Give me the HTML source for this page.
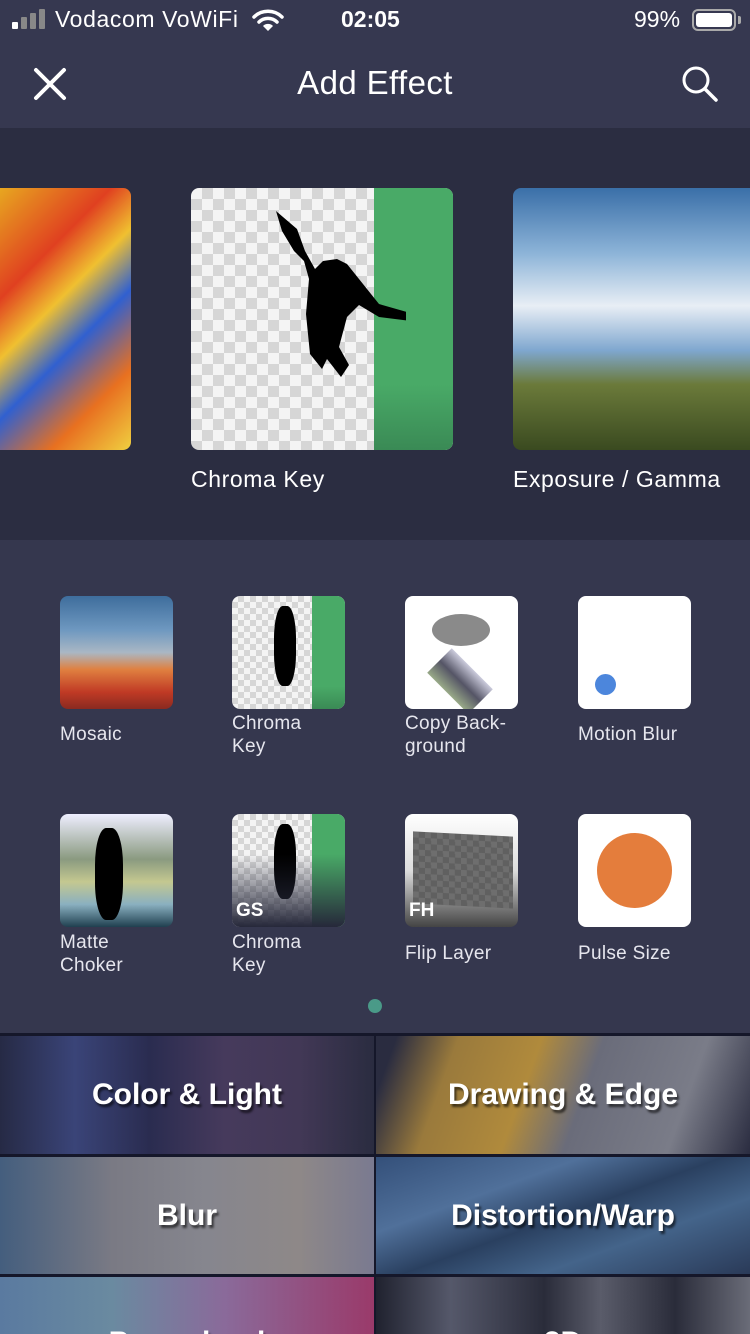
<!DOCTYPE html><html><head><meta charset="utf-8"><style>
*{margin:0;padding:0;box-sizing:border-box}
body{width:750px;height:1334px;overflow:hidden;background:#35374e;font-family:"Liberation Sans",sans-serif;color:#fff;position:relative}
.a{position:absolute}
.chk{background:repeating-conic-gradient(#d6d6d6 0 25%,#f4f4f4 0 50%) 0 0/22px 22px}
.chk2{background:repeating-conic-gradient(#d6d6d6 0 25%,#f4f4f4 0 50%) 0 0/12px 12px}
.t{position:absolute;width:113px;height:113px;border-radius:8px;overflow:hidden}
.l{position:absolute;font-size:19px;line-height:23px;color:#e6e6ee;letter-spacing:.3px}
.tile{position:absolute;overflow:hidden;display:flex;align-items:center;justify-content:center;font-weight:bold;font-size:30px;text-shadow:2px 3px 2px rgba(0,0,0,.6)}
</style></head><body>
<div class="a" style="left:0;top:0;width:750px;height:128px;background:#363850"></div>
<div class="a" style="left:12px;top:22px;width:6px;height:7px;background:#fff;border-radius:1px"></div>
<div class="a" style="left:21px;top:17px;width:6px;height:12px;background:#888;border-radius:1px"></div>
<div class="a" style="left:30px;top:13px;width:6px;height:16px;background:#888;border-radius:1px"></div>
<div class="a" style="left:39px;top:9px;width:6px;height:20px;background:#888;border-radius:1px"></div>
<div class="a" style="left:55px;top:6px;font-size:23px;letter-spacing:.6px">Vodacom VoWiFi</div>
<svg class="a" style="left:252px;top:8px" width="32" height="24" viewBox="0 0 32 24"><path d="M2 9a20 20 0 0 1 28 0M7 14a13 13 0 0 1 18 0" stroke="#fff" stroke-width="3.5" fill="none" stroke-linecap="round"/><path d="M11 18a7 7 0 0 1 10 0L16 23z" fill="#fff"/></svg>
<div class="a" style="left:341px;top:6px;font-size:23px;font-weight:bold">02:05</div>
<div class="a" style="left:634px;top:6px;font-size:23px">99%</div>
<div class="a" style="left:692px;top:9px;width:44px;height:22px;border:2px solid #aaa;border-radius:6px;padding:2px"><div style="width:100%;height:100%;background:#fff;border-radius:3px"></div></div>
<div class="a" style="left:738px;top:16px;width:3px;height:8px;background:#aaa;border-radius:0 2px 2px 0"></div>
<svg class="a" style="left:33px;top:67px" width="34" height="34"><path d="M3 3L31 31M31 3L3 31" stroke="#fff" stroke-width="4" stroke-linecap="round"/></svg>
<div class="a" style="left:0;top:64px;width:750px;text-align:center;font-size:33px;letter-spacing:.4px">Add Effect</div>
<svg class="a" style="left:680px;top:64px" width="40" height="40"><circle cx="16" cy="16" r="12" stroke="#fff" stroke-width="3" fill="none"/><path d="M25 25L36 36" stroke="#fff" stroke-width="3.5" stroke-linecap="round"/></svg>
<div class="a" style="left:0;top:128px;width:750px;height:412px;background:#2b2d41"></div>
<div class="a" style="left:-10px;top:188px;width:141px;height:262px;border-radius:0 8px 8px 0;overflow:hidden;background:linear-gradient(135deg,#e8b020,#e04020 30%,#f0c030 45%,#3060d0 60%,#e87020 80%,#f0d040)"></div>
<div class="a chk" style="left:191px;top:188px;width:262px;height:262px;border-radius:8px;overflow:hidden">
<div class="a" style="left:183px;top:0;width:79px;height:262px;background:linear-gradient(#49aa67 75%,#3a8a55)"></div>
<svg class="a" style="left:75px;top:18px" width="140" height="175" viewBox="0 0 140 175"><path d="M10 5l6 20 12 20 10 10 5 18-3 35 4 40 12 15 5-10 14 18 8-12-10-18 8-30 12-12 20 12 40 5-5-8-35-10-20-25-12-15-10-5-14 2-8 8-10-18-8-22z" fill="#000"/></svg></div>
<div class="a" style="left:513px;top:188px;width:237px;height:262px;border-radius:8px 0 0 8px;overflow:hidden;background:linear-gradient(#3a6fa8,#8db4d8 25%,#e8eef5 45%,#7fa7cf 62%,#6b7a3a 75%,#3a4a20)"></div>
<div class="a" style="left:191px;top:466px;font-size:23px;letter-spacing:.6px">Chroma Key</div>
<div class="a" style="left:513px;top:466px;font-size:23px;letter-spacing:.6px">Exposure / Gamma</div>
<div class="t" style="left:60px;top:596px;background:linear-gradient(#3e6d9c,#6e98c0 30%,#aab7c4 50%,#e08040 65%,#c03a25 85%,#8a2a20)"></div>
<div class="t chk2" style="left:232px;top:596px"><div class="a" style="left:80px;top:0;width:33px;height:113px;background:linear-gradient(#49aa67 80%,#3a8a55)"></div><div class="a" style="left:42px;top:10px;width:22px;height:80px;background:#000;border-radius:40%"></div></div>
<div class="t" style="left:405px;top:596px;background:#fff"><div class="a" style="left:27px;top:18px;width:58px;height:32px;border-radius:50%;background:#8a8a8a"></div><div class="a" style="left:26px;top:56px;width:58px;height:58px;transform:rotate(45deg) scaleY(.6);background:linear-gradient(#ccd,#556,#9a8)"></div></div>
<div class="t" style="left:578px;top:596px;background:#fff"><div class="a" style="left:17px;top:78px;width:21px;height:21px;border-radius:50%;background:#4c86dc"></div></div>
<div class="t" style="left:60px;top:814px;background:linear-gradient(#eef,#8a9a80 40%,#c4c890 60%,#8ab0c0 80%,#204050)"><div class="a" style="left:35px;top:14px;width:28px;height:92px;background:#000;border-radius:40%"></div></div>
<div class="t chk2" style="left:232px;top:814px"><div class="a" style="left:80px;top:0;width:33px;height:113px;background:#49aa67"></div><div class="a" style="left:42px;top:10px;width:22px;height:75px;background:#000;border-radius:40%"></div><div class="a" style="left:0;top:40px;width:113px;height:73px;background:linear-gradient(rgba(40,42,60,0),#26283a)"></div><div class="a" style="left:4px;top:86px;font-weight:bold;font-size:19px">GS</div></div>
<div class="t" style="left:405px;top:814px;background:linear-gradient(#fff,#ddd 50%,#444)"><div class="a chk2" style="left:8px;top:20px;width:100px;height:72px;transform:skewY(3deg);filter:brightness(.45)"></div><div class="a" style="left:4px;top:86px;font-weight:bold;font-size:19px">FH</div></div>
<div class="t" style="left:578px;top:814px;background:#fff"><div class="a" style="left:19px;top:19px;width:75px;height:75px;border-radius:50%;background:#e47d3c"></div></div>
<div class="l" style="left:60px;top:723px">Mosaic</div>
<div class="l" style="left:232px;top:712px">Chroma<br>Key</div>
<div class="l" style="left:405px;top:712px">Copy Back-<br>ground</div>
<div class="l" style="left:578px;top:723px">Motion Blur</div>
<div class="l" style="left:60px;top:931px">Matte<br>Choker</div>
<div class="l" style="left:232px;top:931px">Chroma<br>Key</div>
<div class="l" style="left:405px;top:942px">Flip Layer</div>
<div class="l" style="left:578px;top:942px">Pulse Size</div>
<div class="a" style="left:368px;top:999px;width:14px;height:14px;border-radius:50%;background:#4a9a88"></div>
<div class="a" style="left:0;top:1033px;width:750px;height:301px;background:#15172a"></div>
<div class="tile" style="left:0;top:1036px;width:374px;height:118px;background:linear-gradient(90deg,#262a45,#3a4478 20%,#2a2c50 40%,#463a5c 60%,#423856 80%,#2a2c40)">Color &amp; Light</div>
<div class="tile" style="left:376px;top:1036px;width:374px;height:118px;background:linear-gradient(110deg,#2a2c40 5%,#9a7a3c 20%,#b08a3c 40%,#6a6c7a 55%,#7a7c88 80%,#2a2c40)">Drawing &amp; Edge</div>
<div class="tile" style="left:0;top:1157px;width:374px;height:117px;background:linear-gradient(90deg,#445e7e,#7a7a84 30%,#86868e 55%,#8e8888 80%,#7a7a90)">Blur</div>
<div class="tile" style="left:376px;top:1157px;width:374px;height:117px;background:linear-gradient(160deg,#34507a,#50709a 30%,#2a4060 50%,#44648a 70%,#2a3a58)">Distortion/Warp</div>
<div class="tile" style="left:0;top:1277px;width:374px;height:57px;background:linear-gradient(90deg,#5a7aa0,#6a8aa0 30%,#8a6a9a 60%,#9a3a6a)"><span style="margin-top:75px">Procedural</span></div>
<div class="tile" style="left:376px;top:1277px;width:374px;height:57px;background:linear-gradient(90deg,#20222f,#55586a 20%,#2a2c3a 45%,#5a5c6a 60%,#2a2c3a 80%,#6a6c78)"><span style="margin-top:75px">3D</span></div>
</body></html>
